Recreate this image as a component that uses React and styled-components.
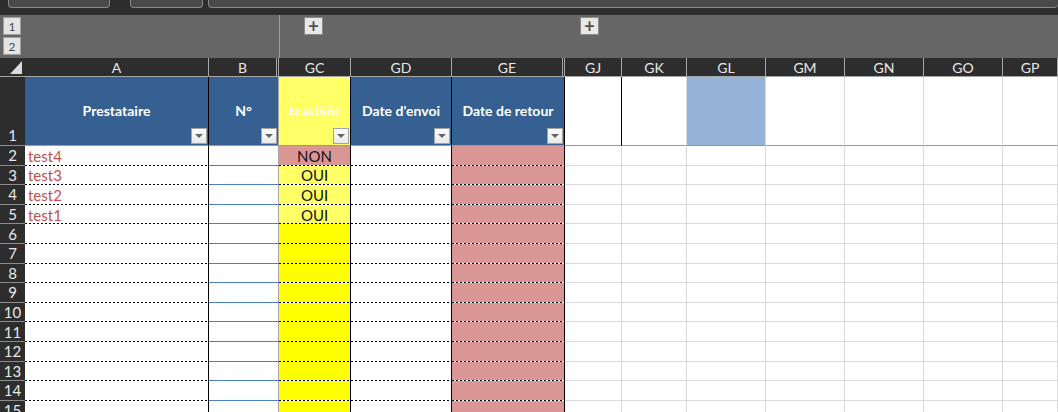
import React from "react";
import styled, { createGlobalStyle, css } from "styled-components";

const GRID_COLS = "25px 184px 70px 72px 101px 113px 57px 65px 79px 79px 79px 79px 1fr";

const Colors = {
  Chrome: "#2d2d2d",
  ToolBox: "#4a4a4a",
  Outline: "#666666",
  HeaderText: "#e8e8e8",
  TableBlue: "#366092",
  Pink: "#da9694",
  PaleYellow: "#ffff66",
  Yellow: "#ffff00",
  SoftBlue: "#95b3d7",
  RedText: "#c0504d",
  GridLine: "#dadada",
  Strong: "#9a9a9a",
};

const GlobalStyle = createGlobalStyle`
  html, body {
    margin: 0;
    padding: 0;
    background: #ffffff;
    overflow: hidden;
  }
  body {
    font-family: Lato, "Liberation Sans", sans-serif;
  }
  * {
    box-sizing: border-box;
  }
`;

const Window = styled.div`
  width: 1058px;
  height: 412px;
  overflow: hidden;
  background: #ffffff;
`;

// formula bar strip, only the bottom of its boxes shows
const TopBar = styled.div`
  height: 15px;
  display: flex;
  align-items: flex-start;
  background: ${Colors.Chrome};
  overflow: hidden;
`;

const ToolBox = styled.div`
  height: 8px;
  margin-left: ${props => props.$left}px;
  width: ${props => (props.$width ? `${props.$width}px` : "auto")};
  flex: ${props => (props.$width ? "none" : "1")};
  background: ${Colors.ToolBox};
  border: 1px solid #8a8a8a;
  border-top: none;
  border-right: ${props => (props.$width ? "1px solid #8a8a8a" : "none")};
  border-radius: 0 0 4px 4px;
`;

const OutlineBar = styled.div`
  height: 43px;
  display: grid;
  grid-template-columns: ${GRID_COLS};
  background: ${Colors.Outline};
`;

const OutlineCell = styled.div`
  display: flex;
  justify-content: center;
  align-items: flex-start;
  padding-top: 2px;
  border-left: ${props => (props.$divider ? "1px solid #9c9c9c" : "none")};
`;

const LevelStack = styled.div`
  display: flex;
  flex-direction: column;
  gap: 2px;
  padding: 2px 0 0 3px;
`;

const LevelButton = styled.div`
  flex: none;
  width: 18px;
  height: 18px;
  display: flex;
  align-items: center;
  justify-content: center;
  background: #e4e4e4;
  border: 1px solid #a0a0a0;
  color: #4a4a4a;
  font-size: 12px;
`;

const ExpandButton = styled.div`
  flex: none;
  width: 19px;
  height: 18px;
  margin-left: ${props => props.$shift || 0}px;
  display: flex;
  align-items: center;
  justify-content: center;
  background: #e8e8e8;
  border: 1px solid #8a8a8a;
  color: #505050;
  font-size: 18px;
  font-weight: 700;
  line-height: 1;
  padding-bottom: 1px;
`;

const Sheet = styled.div`
  display: grid;
  grid-template-columns: ${GRID_COLS};
  grid-template-rows: 19px 69px repeat(14, 19.6px);
`;

const ColHeader = styled.div`
  display: flex;
  align-items: center;
  justify-content: center;
  background: ${Colors.Chrome};
  color: ${Colors.HeaderText};
  font-size: 14px;
  border-bottom: 1px solid #a6a6a6;
  border-right: ${props => (props.$hidden ? "3px double #a6a6a6" : "1px solid #a6a6a6")};
`;

const Corner = styled.div`
  background: ${Colors.Chrome};
  border-bottom: 1px solid #a6a6a6;
  display: flex;
  align-items: flex-end;
  justify-content: flex-end;
  padding: 0 3px 2px 0;
`;

const RowHeader = styled.div`
  display: flex;
  justify-content: center;
  align-items: ${props => (props.$tall ? "flex-end" : "center")};
  padding-bottom: ${props => (props.$tall ? "1px" : "0")};
  background: ${Colors.Chrome};
  color: ${Colors.HeaderText};
  font-size: 15px;
  border-bottom: 1px solid #8c8c8c;
`;

const bottomRules = {
  dotted: css`
    background-image: linear-gradient(to right, #000 2px, #fff 2px);
    background-size: 4px 1px;
    background-repeat: repeat-x;
    background-position: left bottom;
  `,
  blue: css`
    border-bottom: 1px solid #4a7fc1;
  `,
  grid: css`
    border-bottom: 1px solid ${Colors.GridLine};
  `,
  strong: css`
    border-bottom: 1px solid ${Colors.Strong};
  `,
};

const Cell = styled.div`
  position: relative;
  display: flex;
  align-items: center;
  justify-content: ${props => props.$align || "flex-start"};
  padding-left: ${props => (props.$align ? "0" : "3px")};
  background-color: ${props => props.$bg || "#ffffff"};
  border-right: 1px solid ${props => props.$right || Colors.GridLine};
  color: ${props => props.$color || "#111"};
  font-size: 15px;
  white-space: nowrap;
  overflow: hidden;
  ${props => bottomRules[props.$bottom || "grid"]}
`;

const TitleCell = styled(Cell)`
  justify-content: center;
  padding-left: 0;
  color: #ffffff;
  font-weight: 700;
  font-size: ${props => (props.$small ? "11px" : "14px")};
  padding-bottom: 2px;
`;

const FilterButton = styled.span`
  position: absolute;
  right: 1px;
  bottom: 1px;
  width: 16px;
  height: 16px;
  border: 1px solid #a3a3a3;
  background: linear-gradient(#fdfdfd, #e9e9e9);
  display: flex;
  align-items: center;
  justify-content: center;

  &::after {
    content: "";
    border-left: 4px solid transparent;
    border-right: 4px solid transparent;
    border-top: 4px solid #636363;
  }
`;

const COLUMNS = [
  { key: "A", right: "#000", title: "Prestataire" },
  { key: "B", right: "#a6a6a6", title: "N°", hidden: true },
  { key: "GC", right: "#000", title: "En activité", small: true, bg: Colors.PaleYellow },
  { key: "GD", right: "#000", title: "Date d'envoi" },
  { key: "GE", right: "#000", title: "Date de retour", hidden: true },
  { key: "GJ", right: "#000" },
  { key: "GK" },
  { key: "GL", bg: Colors.SoftBlue },
  { key: "GM" },
  { key: "GN" },
  { key: "GO" },
  { key: "GP" },
];

const ROWS = [
  { n: 2, name: "test4", active: "NON" },
  { n: 3, name: "test3", active: "OUI" },
  { n: 4, name: "test2", active: "OUI" },
  { n: 5, name: "test1", active: "OUI" },
  ...[6, 7, 8, 9, 10, 11, 12, 13, 14, 15].map(n => ({ n })),
];

const activeColor = value => {
  if (value === "NON") return Colors.Pink;
  if (value === "OUI") return Colors.PaleYellow;
  return Colors.Yellow;
};

const SelectAll = () => (
  <svg width="12" height="13" viewBox="0 0 12 13">
    <polygon points="12,0 12,13 0,13" fill="#dcdcdc" />
  </svg>
);

const TitleRow = () => (
  <>
    <RowHeader $tall>1</RowHeader>
    {COLUMNS.map(col =>
      col.title ? (
        <TitleCell
          key={col.key}
          $bg={col.bg || Colors.TableBlue}
          $right={col.right}
          $bottom="strong"
          $small={col.small}
        >
          {col.title}
          <FilterButton />
        </TitleCell>
      ) : (
        <Cell key={col.key} $bg={col.bg} $right={col.right} $bottom="strong" />
      )
    )}
  </>
);

const DataRow = ({ row }) => (
  <>
    <RowHeader>{row.n}</RowHeader>
    <Cell $right="#000" $bottom="dotted" $color={Colors.RedText}>
      {row.name}
    </Cell>
    <Cell $right="#a6a6a6" $bottom="blue" />
    <Cell $right="#000" $bottom="dotted" $align="center" $bg={activeColor(row.active)}>
      {row.active}
    </Cell>
    <Cell $right="#000" $bottom="dotted" />
    <Cell $right="#000" $bottom="dotted" $bg={Colors.Pink} />
    {["GJ", "GK", "GL", "GM", "GN", "GO", "GP"].map(key => (
      <Cell key={key} />
    ))}
  </>
);

const App = () => (
  <Window>
    <GlobalStyle />
    <TopBar>
      <ToolBox $left={8} $width={102} />
      <ToolBox $left={20} $width={73} />
      <ToolBox $left={5} />
    </TopBar>
    <OutlineBar>
      <LevelStack>
        <LevelButton>1</LevelButton>
        <LevelButton>2</LevelButton>
      </LevelStack>
      <OutlineCell />
      <OutlineCell />
      <OutlineCell $divider>
        <ExpandButton $shift={-4}>+</ExpandButton>
      </OutlineCell>
      <OutlineCell />
      <OutlineCell />
      <OutlineCell>
        <ExpandButton $shift={-8}>+</ExpandButton>
      </OutlineCell>
    </OutlineBar>
    <Sheet>
      <Corner>
        <SelectAll />
      </Corner>
      {COLUMNS.map(col => (
        <ColHeader key={col.key} $hidden={col.hidden}>
          {col.key}
        </ColHeader>
      ))}
      <TitleRow />
      {ROWS.map(row => (
        <DataRow key={row.n} row={row} />
      ))}
    </Sheet>
  </Window>
);

export default App;
